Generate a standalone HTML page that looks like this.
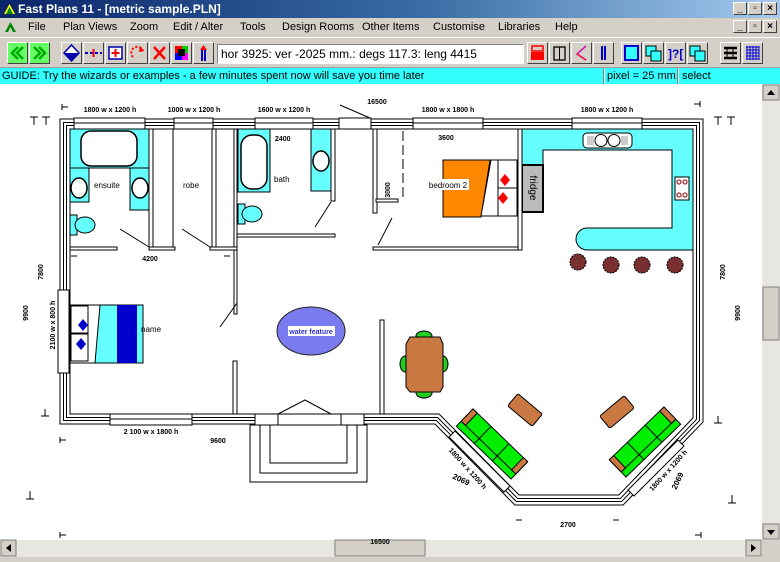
<!DOCTYPE html>
<html><head><meta charset="utf-8"><style>
*{margin:0;padding:0;box-sizing:border-box}
body{width:780px;height:562px;overflow:hidden;background:#d4d0c8;font-family:"Liberation Sans",sans-serif;position:relative}
.abs{position:absolute}
.title{left:0;top:0;width:780px;height:18px;background:linear-gradient(90deg,#0a246a,#3a6ea5 55%,#a6caf0);color:#fff;font-weight:bold;font-size:12px;line-height:18px;padding-left:18px}
.wb{width:14px;height:13px;background:#d4d0c8;border:1px solid;border-color:#fff #404040 #404040 #fff;font-size:10px;line-height:11px;text-align:center;color:#000;font-weight:bold}
.menu{top:18px;left:0;width:780px;height:18px;font-size:11px;line-height:18px}
.menu span{position:absolute;top:0}
.btn{top:42px;width:21px;height:22px;background:#d4d0c8;border:1px solid;border-color:#fff #404040 #404040 #fff}
.guide{top:67px;left:0;width:780px;height:17px;background:#33ffff;font-size:11px;line-height:17px;border-top:1px solid #a0a0a0}
</style></head><body>
<div class="abs title">Fast Plans 11 - [metric sample.PLN]</div>
<svg class="abs" style="left:3px;top:3px" width="13" height="12"><path d="M6.5 1 L12 11 L1 11Z" fill="#ff0"/><path d="M6.5 4 L10 11 L3 11Z" fill="#080"/></svg>
<div class="abs wb" style="left:733px;top:2px">_</div><div class="abs wb" style="left:748px;top:2px">▫</div><div class="abs wb" style="left:763px;top:2px">×</div>
<div class="abs menu">
<svg style="position:absolute;left:4px;top:3px" width="13" height="12"><path d="M6.5 1 L12 11 L1 11Z" fill="#080"/><path d="M6.5 6 L9 11 L4 11Z" fill="#d4d0c8"/></svg>
<span style="left:28px">File</span><span style="left:63px">Plan Views</span><span style="left:130px">Zoom</span><span style="left:173px">Edit / Alter</span><span style="left:240px">Tools</span><span style="left:282px">Design Rooms</span><span style="left:362px">Other Items</span><span style="left:433px">Customise</span><span style="left:498px">Libraries</span><span style="left:555px">Help</span>
</div>
<div class="abs wb" style="left:733px;top:20px">_</div><div class="abs wb" style="left:748px;top:20px">▫</div><div class="abs wb" style="left:763px;top:20px">×</div>
<div class="abs" style="left:0;top:37px;width:780px;height:1px;background:#fff"></div>
<div class="abs btn" style="left:7px;background:#6f6"><svg width="19" height="20"><path d="M10 4 L4 10 L10 16 M15 4 L9 10 L15 16" stroke="#0a0" stroke-width="2.5" fill="none"/></svg></div>
<div class="abs btn" style="left:29px;background:#6f6"><svg width="19" height="20"><path d="M4 4 L10 10 L4 16 M9 4 L15 10 L9 16" stroke="#0a0" stroke-width="2.5" fill="none"/></svg></div>
<div class="abs btn" style="left:61px"><svg width="19" height="20"><path d="M9.5 2 L17 10 L9.5 18 L2 10Z" fill="#fff" stroke="#00a" stroke-width="1.5"/><path d="M2 10 L17 10 L9.5 18Z" fill="#00a"/></svg></div>
<div class="abs btn" style="left:83px"><svg width="19" height="20"><path d="M1 10H18" stroke="#00c" stroke-width="2" stroke-dasharray="3 2"/><path d="M9.5 6V14" stroke="red" stroke-width="2"/></svg></div>
<div class="abs btn" style="left:105px"><svg width="19" height="20"><rect x="3" y="4" width="13" height="12" fill="#fff" stroke="#00a" stroke-width="1.5"/><path d="M9.5 6V14M5.5 10H13.5" stroke="red" stroke-width="2"/></svg></div>
<div class="abs btn" style="left:127px"><svg width="19" height="20"><path d="M5 14 A6 6 0 1 1 15 8" stroke="red" stroke-width="2" fill="none" stroke-dasharray="2 2"/><path d="M12 3 L16 8 L11 9Z" fill="red"/></svg></div>
<div class="abs btn" style="left:149px"><svg width="19" height="20"><path d="M4 4L15 16M15 4L4 16" stroke="red" stroke-width="2.5"/></svg></div>
<div class="abs btn" style="left:171px"><svg width="19" height="20"><rect x="3" y="3" width="7" height="7" fill="#f00"/><rect x="10" y="3" width="6" height="7" fill="#0c0"/><rect x="3" y="10" width="7" height="7" fill="#00f"/><rect x="10" y="10" width="6" height="7" fill="#f0f"/><rect x="6" y="6" width="7" height="7" fill="#000"/></svg></div>
<div class="abs btn" style="left:193px"><svg width="19" height="20"><path d="M8 18V6M11 18V6" stroke="#00c" stroke-width="2"/><path d="M9.5 2L13 7H6Z" fill="red"/></svg></div>
<div class="abs" style="left:217px;top:44px;width:307px;height:20px;background:#fff;border:1px solid;border-color:#808080 #fff #fff #808080;font-size:12px;line-height:18px;padding-left:3px">hor 3925: ver -2025 mm.: degs 117.3: leng 4415</div>
<div class="abs btn" style="left:527px"><svg width="19" height="20"><rect x="3" y="9" width="13" height="8" fill="red"/><rect x="4" y="3" width="11" height="5" fill="none" stroke="red" stroke-width="1.5"/></svg></div>
<div class="abs btn" style="left:549px"><svg width="19" height="20"><rect x="4" y="4" width="11" height="13" fill="none" stroke="#000" stroke-width="1.3"/><path d="M9.5 4V17" stroke="#000"/></svg></div>
<div class="abs btn" style="left:571px"><svg width="19" height="20"><path d="M14 3L5 11L14 17" stroke="#c0a" stroke-width="1.5" fill="none"/><path d="M5 11L14 17" stroke="red"/></svg></div>
<div class="abs btn" style="left:593px"><svg width="19" height="20"><path d="M8 3V17M11 3V17" stroke="#00c" stroke-width="2"/></svg></div>
<div class="abs btn" style="left:621px"><svg width="19" height="20"><rect x="3" y="3" width="13" height="14" fill="#3ff" stroke="#00c" stroke-width="2"/></svg></div>
<div class="abs btn" style="left:643px"><svg width="19" height="20"><rect x="2" y="3" width="10" height="10" fill="#3ff" stroke="#000"/><rect x="7" y="8" width="10" height="10" fill="#3ff" stroke="#000"/></svg></div>
<div class="abs btn" style="left:665px"><svg width="19" height="20"><text x="2" y="15" font-size="12" font-weight="bold" fill="#00c" font-family="Liberation Sans">]?[</text></svg></div>
<div class="abs btn" style="left:687px"><svg width="19" height="20"><rect x="2" y="3" width="10" height="10" fill="#3ff" stroke="#000"/><rect x="7" y="8" width="10" height="10" fill="#3ff" stroke="#000"/></svg></div>
<div class="abs btn" style="left:720px"><svg width="19" height="20"><path d="M3 5H16M3 10H16M3 15H16" stroke="#000" stroke-width="2.5"/><path d="M6 5V15M12 5V15" stroke="#000"/></svg></div>
<div class="abs btn" style="left:742px"><svg width="19" height="20"><path d="M3 4H16M3 7H16M3 10H16M3 13H16M3 16H16M4 3V17M7 3V17M10 3V17M13 3V17M16 3V17" stroke="#00c" stroke-width="1"/></svg></div>
<div class="abs guide"><span style="position:absolute;left:2px">GUIDE: Try the wizards or examples - a few minutes spent now will save you time later</span>
<span style="position:absolute;left:603px;top:0;height:16px;border-left:1px solid #808080;border-right:1px solid #fff"></span><span style="position:absolute;left:607px">pixel = 25 mm.</span>
<span style="position:absolute;left:677px;top:0;height:16px;border-left:1px solid #808080;border-right:1px solid #fff"></span><span style="position:absolute;left:682px">select</span></div>

<svg class="abs" style="left:0;top:84px" width="780" height="478" viewBox="0 84 780 478" font-family="Liberation Sans" font-weight="bold">
<rect x="0" y="84" width="762" height="456" fill="#fff"/>
<rect x="762" y="84" width="18" height="456" fill="#e8e6e0"/>
<rect x="763" y="85" width="16" height="15" fill="#d4d0c8" stroke="#808080"/><path d="M767 95L771 90L775 95Z" fill="#000"/>
<rect x="763" y="287" width="16" height="53" fill="#d4d0c8" stroke="#808080"/>
<rect x="763" y="524" width="16" height="15" fill="#d4d0c8" stroke="#808080"/><path d="M767 530L771 535L775 530Z" fill="#000"/>
<rect x="0" y="540" width="762" height="17" fill="#e8e6e0"/>
<rect x="1" y="540" width="15" height="16" fill="#d4d0c8" stroke="#808080"/><path d="M11 544L6 548L11 552Z" fill="#000"/>
<rect x="335" y="540" width="90" height="16" fill="#d4d0c8" stroke="#808080"/>
<rect x="746" y="540" width="15" height="16" fill="#d4d0c8" stroke="#808080"/><path d="M751 544L756 548L751 552Z" fill="#000"/>
<rect x="762" y="540" width="18" height="22" fill="#d4d0c8"/>
<rect x="0" y="557" width="780" height="5" fill="#d4d0c8"/>

<path d="M522 129H693V250H587A11 11 0 0 1 587 228H672V150H543V165H522Z" fill="#6ff" stroke="#000" stroke-width="1"/>
<rect x="522" y="165" width="21" height="47" fill="#bbb" stroke="#000" stroke-width="2"/>
<text transform="translate(530,188) rotate(90)" font-size="10" font-weight="normal" text-anchor="middle" fill="#000">fridge</text>
<rect x="583" y="133" width="49" height="15" rx="4" fill="#fff" stroke="#000"/><rect x="587" y="136" width="7" height="9" fill="#ccc"/><rect x="621" y="136" width="7" height="9" fill="#ccc"/><circle cx="601" cy="140.5" r="6" fill="#fff" stroke="#000"/><circle cx="614" cy="140.5" r="6" fill="#fff" stroke="#000"/>
<rect x="675" y="177" width="14" height="23" fill="#fff" stroke="#000"/><g fill="#fff" stroke="#a33" stroke-width="1.3"><circle cx="679" cy="182" r="2"/><circle cx="685" cy="182" r="2"/><circle cx="679" cy="195" r="2"/><circle cx="685" cy="195" r="2"/></g>
<g fill="#7a3030" stroke="#000" stroke-dasharray="2 1"><circle cx="578" cy="262" r="8"/><circle cx="611" cy="265" r="8"/><circle cx="642" cy="265" r="8"/><circle cx="675" cy="265" r="8"/></g>

<rect x="69" y="129" width="81" height="39" fill="#6ff" stroke="#000"/>
<rect x="81" y="131" width="56" height="35" rx="10" fill="#fff" stroke="#000" stroke-width="1.5"/>
<rect x="69" y="168" width="20" height="34" fill="#6ff" stroke="#000"/>
<rect x="130" y="168" width="20" height="42" fill="#6ff" stroke="#000"/>
<ellipse cx="79" cy="188" rx="8" ry="10" fill="#fff" stroke="#000" stroke-width="1.5"/><ellipse cx="140" cy="188" rx="8" ry="10" fill="#fff" stroke="#000" stroke-width="1.5"/>
<rect x="70" y="215" width="7" height="20" fill="#6ff" stroke="#000"/><ellipse cx="85" cy="225" rx="10" ry="8" fill="#6ff" stroke="#000"/>
<text x="94" y="188" font-size="8" font-weight="normal">ensuite</text>
<text x="183" y="188" font-size="8" font-weight="normal">robe</text>
<rect x="238" y="129" width="32" height="63" fill="#6ff" stroke="#000"/>
<rect x="241" y="135" width="26" height="54" rx="11" fill="#fff" stroke="#000" stroke-width="1.5"/>
<rect x="311" y="129" width="20" height="62" fill="#6ff" stroke="#000"/><ellipse cx="321" cy="161" rx="8" ry="10" fill="#fff" stroke="#000" stroke-width="1.5"/>
<rect x="238" y="204" width="7" height="20" fill="#6ff" stroke="#000"/><ellipse cx="252" cy="214" rx="10" ry="8" fill="#6ff" stroke="#000"/>
<text x="274" y="182" font-size="8" font-weight="normal">bath</text>
<text x="275" y="141" font-size="7">2400</text>

<g fill="#fff" stroke="#000" stroke-width="1">
<rect x="149" y="129" width="4" height="121"/>
<rect x="212" y="129" width="4" height="121"/>
<rect x="234" y="129" width="3" height="185"/>
<rect x="69" y="247" width="48" height="3"/>
<rect x="149" y="247" width="26" height="3"/>
<rect x="210" y="247" width="27" height="3"/>
<rect x="237" y="234" width="98" height="3"/>
<rect x="331" y="129" width="4" height="72"/>
<rect x="233" y="361" width="4" height="53"/>
<rect x="373" y="129" width="4" height="84"/>
<rect x="373" y="247" width="149" height="3"/>
<rect x="518" y="129" width="4" height="121"/>
<rect x="380" y="320" width="4" height="94"/>
<rect x="376" y="199" width="22" height="3"/>
</g>
<path d="M173 129V247" stroke="#000"/>
<path d="M403 131V200" stroke="#000" stroke-dasharray="10 4"/>
<g stroke="#000" fill="none"><path d="M120 229L149 247"/><path d="M182 229L210 247"/><path d="M331 202L315 227"/><path d="M237 303L220 327"/><path d="M392 218L378 245"/><path d="M340 105L370 118"/></g>
<path d="M443 160H490L481 217H443Z" fill="#f80" stroke="#000"/>
<path d="M491 160H498V216H481Z" fill="#fff" stroke="#000"/>
<rect x="498" y="160" width="19" height="28" fill="#fff" stroke="#000"/><rect x="498" y="188" width="19" height="28" fill="#fff" stroke="#000"/>
<path d="M505 174L510 180L505 186L500 180Z" fill="red"/><path d="M503 192L508 198L503 204L498 198Z" fill="red"/>
<rect x="427" y="179" width="42" height="11" fill="#fff"/><text x="448" y="188" font-size="8" font-weight="normal" text-anchor="middle">bedroom 2</text>
<text x="446" y="140" font-size="7" text-anchor="middle">3600</text>
<text transform="translate(390,190) rotate(-90)" font-size="7" text-anchor="middle">3000</text>
<rect x="70" y="305" width="73" height="58" fill="#fff" stroke="#000"/>
<path d="M100 305H143V363H95Z" fill="#6ff" stroke="#000"/>
<rect x="117" y="305" width="20" height="58" fill="#00c"/>
<rect x="71" y="306" width="17" height="27" fill="#fff" stroke="#000"/><rect x="71" y="334" width="17" height="27" fill="#fff" stroke="#000"/>
<path d="M83 319L88 325L83 331L78 325Z" fill="#00c"/><path d="M81 338L86 344L81 350L76 344Z" fill="#00c"/>
<text x="141" y="332" font-size="8" font-weight="normal">name</text>
<ellipse cx="311" cy="331" rx="34" ry="24" fill="#7b7bf0" stroke="#222"/>
<rect x="288" y="326" width="47" height="10" fill="#fff"/><text x="311" y="334" font-size="7" text-anchor="middle" fill="#33c">water feature</text>
<ellipse cx="424" cy="336" rx="8" ry="5" fill="#2c2" stroke="#000"/><ellipse cx="424" cy="393" rx="8" ry="5" fill="#2c2" stroke="#000"/>
<ellipse cx="405" cy="364" rx="5" ry="8" fill="#2c2" stroke="#000"/><ellipse cx="443" cy="364" rx="5" ry="8" fill="#2c2" stroke="#000"/>
<path d="M410 337H440L443 344V387L440 392H410L406 387V344Z" fill="#c87840" stroke="#000"/>
<rect x="-16" y="-8" width="32" height="16" rx="2" transform="translate(525,410) rotate(40)" fill="#c87840" stroke="#000"/>
<rect x="-16" y="-8" width="32" height="16" rx="2" transform="translate(617,412) rotate(-40)" fill="#c87840" stroke="#000"/>
<g transform="translate(492,444) rotate(44)"><rect x="-38" y="-12" width="76" height="24" fill="#0e0" stroke="#000"/><path d="M-38 5H38M-13 -12V12M12 -12V12" stroke="#000"/><rect x="-38" y="-12" width="6" height="17" fill="#c87840" stroke="#000"/><rect x="32" y="-12" width="6" height="17" fill="#c87840" stroke="#000"/></g>
<g transform="translate(645,442) rotate(-44)"><rect x="-38" y="-12" width="76" height="24" fill="#0e0" stroke="#000"/><path d="M-38 5H38M-13 -12V12M12 -12V12" stroke="#000"/><rect x="-38" y="-12" width="6" height="17" fill="#c87840" stroke="#000"/><rect x="32" y="-12" width="6" height="17" fill="#c87840" stroke="#000"/></g>

<path d="M65 124H698V420L621 500H517L437 419H65Z" fill="none" stroke="#000" stroke-width="11"/>
<path d="M65 124H698V420L621 500H517L437 419H65Z" fill="none" stroke="#fff" stroke-width="9"/>
<path d="M65 124H698V420L621 500H517L437 419H65Z" fill="none" stroke="#000" stroke-width="4"/>
<path d="M65 124H698V420L621 500H517L437 419H65Z" fill="none" stroke="#fff" stroke-width="2"/>
<g fill="#fff" stroke="#000">
<rect x="74" y="118" width="71" height="11"/><rect x="174" y="118" width="39" height="11"/><rect x="255" y="118" width="58" height="11"/><rect x="339" y="118" width="32" height="11"/><rect x="413" y="118" width="70" height="11"/><rect x="572" y="118" width="70" height="11"/>
<rect x="58" y="290" width="11" height="83"/>
<rect x="110" y="414" width="82" height="11"/><rect x="277" y="414" width="64" height="11"/>
<rect x="255" y="414" width="23" height="11"/><rect x="341" y="414" width="23" height="11"/>
</g>
<path d="M74 123H145M174 123H213M255 123H313M413 123H483M572 123H642M110 419H192" stroke="#000"/>
<path d="M278 414L305 400L331 414" stroke="#000" fill="none"/>
<g fill="none" stroke="#000"><rect x="250" y="425" width="117" height="57"/><rect x="260" y="425" width="97" height="48"/><rect x="270" y="425" width="77" height="38"/></g>
<g fill="#fff" stroke="#000"><path d="M455 431L510 486L504 492L449 437Z"/><path d="M678 440L628 490L634 496L684 446Z"/></g>

<g font-size="7" text-anchor="middle" fill="#000">
<text x="377" y="104">16500</text>
<text x="110" y="112">1800 w x 1200 h</text><text x="194" y="112">1000 w x 1200 h</text><text x="284" y="112">1600 w x 1200 h</text><text x="448" y="112">1800 w x 1800 h</text><text x="607" y="112">1800 w x 1200 h</text>
<text x="150" y="261">4200</text>
<text x="151" y="434">2 100 w x 1800 h</text>
<text x="218" y="443">9600</text>
<text x="568" y="527">2700</text>
<text transform="translate(43,272) rotate(-90)">7800</text>
<text transform="translate(28,313) rotate(-90)">9900</text>
<text transform="translate(55,325) rotate(-90)">2100 w x 800 h</text>
<text transform="translate(725,272) rotate(-90)">7800</text>
<text transform="translate(740,313) rotate(-90)">9900</text>
<text transform="translate(466,470) rotate(48)">1800 w x 1200 h</text>
<text transform="translate(670,472) rotate(-48)">1800 w x 1200 h</text>
<text transform="translate(460,482) rotate(25)" font-size="8">2069</text>
<text transform="translate(680,482) rotate(-65)" font-size="8">2069</text>
<text x="380" y="544" font-size="7">16500</text>
</g>
<g stroke="#000" fill="none" stroke-width="1">
<path d="M62 104V110M62 107H68"/><path d="M30 117H38M34 117V125M42 117H50M46 117V125"/>
<path d="M700 101V107M694 104H700"/><path d="M714 117H722M718 117V125M727 117H735M731 117V125"/>
<path d="M41 416H49M45 416V409"/><path d="M26 499H34M30 499V491"/><path d="M60 437V443M60 440H66"/><path d="M60 532V538M60 535H66"/>
<path d="M714 423H722M718 423V416"/><path d="M728 503H736M732 503V495"/><path d="M701 532V538M695 535H701"/>
<path d="M71 256H77M230 256H224M516 520H522M619 520H613"/>
</g>
</svg>
</body></html>
